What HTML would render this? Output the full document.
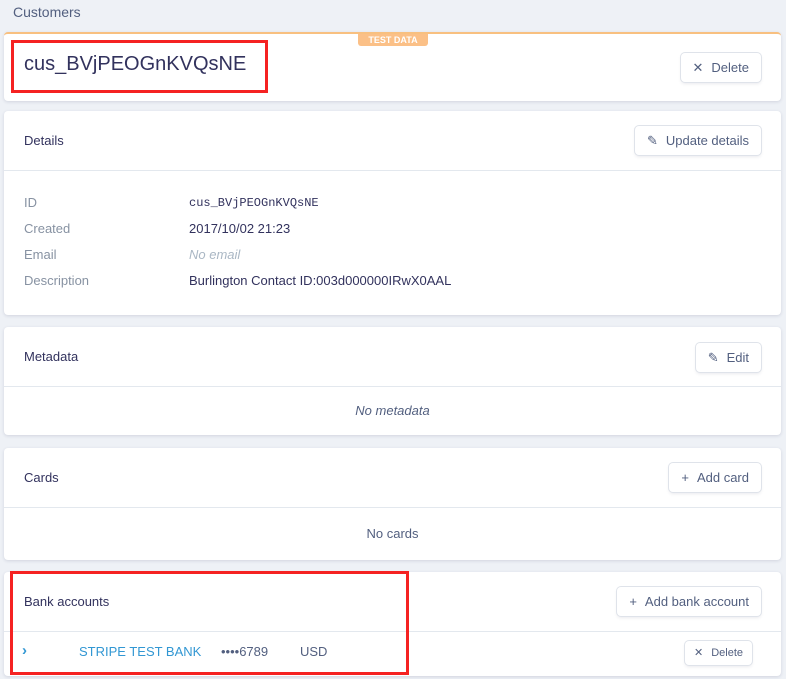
<!DOCTYPE html><html><head><style>
body{margin:0;width:786px;height:679px;background:#eef1f6;font-family:"Liberation Sans",sans-serif;color:#32325d;position:relative;overflow:hidden;font-size:13px}
.card{position:absolute;left:4px;width:777px;background:#fff;border-radius:4px;box-shadow:0 1px 3px rgba(50,50,93,.15)}
.hd{position:absolute;left:20px;font-size:13px;color:#32325d}
.sep{position:absolute;left:0;right:0;height:1px;background:#e3e8ee}
.btn{position:absolute;right:20px;height:29px;border-radius:4px;background:#fff;box-shadow:0 0 0 1px #dfe3ea,0 2px 3px rgba(50,50,93,.1);font-size:13px;color:#525f7f;line-height:29px;padding:0 12px;box-sizing:border-box;white-space:nowrap}
.btn b{font-weight:normal;margin-right:8px}
.lbl{position:absolute;left:20px;color:#8792a2}
.val{position:absolute;left:185px}
.red{position:absolute;border:3px solid #f52222;box-sizing:border-box}
</style></head><body>
<div style="position:absolute;left:13px;top:4px;color:#525f7f;font-size:14px">Customers</div>
<div class="card" style="top:32px;height:67px;border-top:2px solid #f8c080">
<div style="position:absolute;left:354px;top:0;width:70px;height:12px;background:#fbc087;color:#fff;font-size:9px;font-weight:bold;text-align:center;line-height:12px;border-radius:0 0 3px 3px">TEST DATA</div>
<div style="position:absolute;left:20px;top:19px;font-size:20px">cus_BVjPEOGnKVQsNE</div>
<div class="btn" style="top:19px"><b>✕</b>Delete</div></div>
<div class="card" style="top:111px;height:204px">
<div class="hd" style="top:22px">Details</div>
<div class="btn" style="top:15px"><b>✎</b>Update details</div>
<div class="sep" style="top:59px"></div>
<div class="lbl" style="top:84px">ID</div><div class="val" style="top:85px;font-family:'Liberation Mono',monospace;font-size:12px">cus_BVjPEOGnKVQsNE</div>
<div class="lbl" style="top:110px">Created</div><div class="val" style="top:110px">2017/10/02 21:23</div>
<div class="lbl" style="top:136px">Email</div><div class="val" style="top:136px;color:#aab7c4;font-style:italic">No email</div>
<div class="lbl" style="top:162px">Description</div><div class="val" style="top:162px">Burlington Contact ID:003d000000IRwX0AAL</div></div>
<div class="card" style="top:327px;height:108px">
<div class="hd" style="top:22px">Metadata</div>
<div class="btn" style="top:16px"><b>✎</b>Edit</div>
<div class="sep" style="top:59px"></div>
<div style="position:absolute;left:0;right:0;top:76px;text-align:center;font-style:italic;color:#525f7f">No metadata</div></div>
<div class="card" style="top:448px;height:112px">
<div class="hd" style="top:22px">Cards</div>
<div class="btn" style="top:15px"><b>+</b>Add card</div>
<div class="sep" style="top:59px"></div>
<div style="position:absolute;left:0;right:0;top:78px;text-align:center;color:#525f7f">No cards</div></div>
<div class="card" style="top:572px;height:104px">
<div class="hd" style="top:22px">Bank accounts</div>
<div class="btn" style="top:15px"><b>+</b>Add bank account</div>
<div class="sep" style="top:59px"></div>
<div style="position:absolute;left:18px;top:70px;color:#3297d3;font-weight:bold;font-size:15px">›</div>
<div style="position:absolute;left:75px;top:72px;color:#3297d3">STRIPE TEST BANK</div>
<div style="position:absolute;left:217px;top:72px;color:#525f7f">••••6789</div>
<div style="position:absolute;left:296px;top:72px;color:#525f7f">USD</div>
<div class="btn" style="right:29px;top:69px;height:24px;line-height:24px;font-size:11px;padding:0 9px"><b>✕</b>Delete</div></div>
<div class="red" style="left:11px;top:40px;width:257px;height:53px"></div>
<div class="red" style="left:10px;top:571px;width:399px;height:104px"></div>
</body></html>
